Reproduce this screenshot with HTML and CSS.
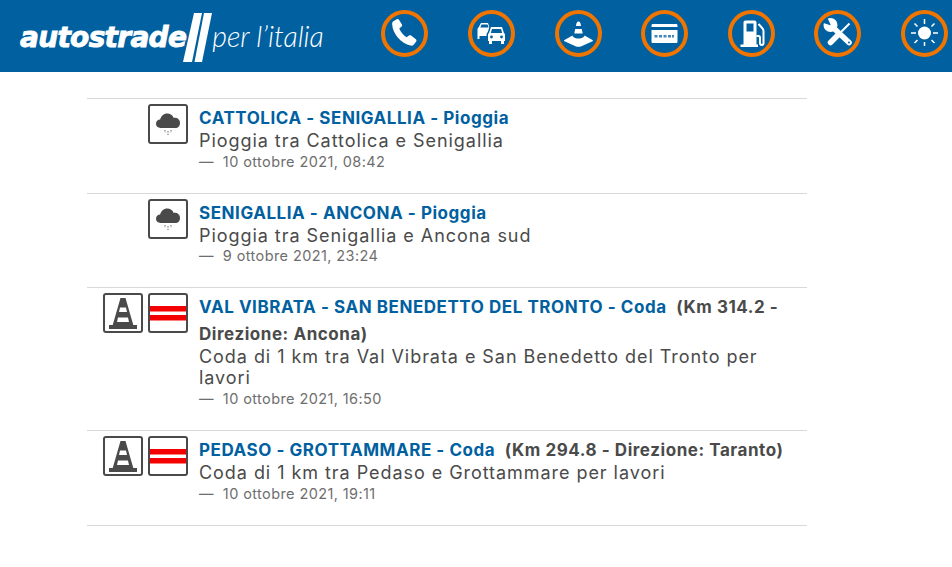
FILE: index.html
```html
<!DOCTYPE html>
<html lang="it">
<head>
<meta charset="utf-8">
<title>Autostrade per l'Italia</title>
<link rel="stylesheet" href="styles.css">
</head>
<body>
<header class="top">
  <div class="logo">
    <span class="logo-a">autostrade</span>
    <svg class="logo-bars" width="30" height="50" viewBox="0 0 30 50"><polygon points="11,0 19,0 9,49 0,49" fill="#fff"/><polygon points="21,0 29,0 19,49 11.500,49" fill="#fff"/></svg>
    <span class="logo-b">per l’italia</span>
  </div>
  <nav class="nav">
    <a class="nav-i"><svg viewBox="0 0 47 47"><circle cx="23.5" cy="23.5" r="21.5" class="ring"/><path fill="#fff" d="M12 11.500l3.800-2.300c.9-.5 1.700-.2 2.200.6l2.900 4.800c.4.8.3 1.500-.3 2l-2.300 1.900c1.300 3.300 3.800 6.500 7.300 8.800l2.400-1.700c.7-.5 1.400-.5 2.100 0l4.800 3.700c.7.6.8 1.400.3 2.100l-2.300 3.100c-.7 1-1.900 1.400-3.200 1.100-9.700-2.600-17.900-11.300-18.500-21.200-.1-1.300.1-2.300.8-2.900z"/></svg></a>
    <a class="nav-i"><svg viewBox="0 0 47 47"><circle cx="23.500" cy="23.500" r="21.500" class="ring"/><path fill="#fff" fill-rule="evenodd" d="M13 13h7l1.500 4.500c.7.4 1 1 1 1.800V26h-1v3h-2v-3h-8v3h-2v-3H9.500V19.300c0-.8.3-1.400 1-1.800zM13.500 14.500l-1.200 3h8.400l-1.200-3z"/><path fill="#fff" stroke="#0060a0" stroke-width="3" paint-order="stroke" d="M23 17h11l2 6c.7.4 1 1 1 1.800V31h-1v3h-3v-3H24v3h-3v-3h-1v-6.200c0-.8.3-1.400 1-1.800z"/><path fill="#0060a0" d="M24 19l-1.200 4h11.400l-1.200-4z"/><circle cx="23.500" cy="27" r="1.400" fill="#0060a0"/><circle cx="33.500" cy="27" r="1.400" fill="#0060a0"/></svg></a>
    <a class="nav-i"><svg viewBox="0 0 47 47"><circle cx="23.500" cy="23.500" r="21.500" class="ring"/><path fill="#fff" d="M21 16c.2-3 1-4.500 2.500-4.500s2.300 1.500 2.500 4.500zM20.200 19h6.600l.9 4.500H19.300zM17.500 25.500c0 1.500 2.500 3 6 3s6-1.500 6-3l8 4.500c.6.400.6.800 0 1.200l-11 5c-2 .8-4 .8-6 0l-11-5c-.6-.4-.6-.8 0-1.200z"/></svg></a>
    <a class="nav-i"><svg viewBox="0 0 47 47"><circle cx="23.500" cy="23.500" r="21.500" class="ring"/><path fill="#fff" d="M12 14h23c1 0 1.500.5 1.500 1.500V17h-26v-1.500c0-1 .5-1.500 1.500-1.500zM10.500 20h26v11.500c0 1-.5 1.500-1.500 1.500H12c-1 0-1.500-.5-1.500-1.500z"/><path fill="#0060a0" opacity=".75" d="M13.500 25h3v2.500h-3zM18 25h3v2.500h-3zM22.500 25h3v2.500h-3zM27 25h3v2.500h-3zM31 25h2v2.500h-2z"/></svg></a>
    <a class="nav-i"><svg viewBox="0 0 47 47"><circle cx="23.500" cy="23.500" r="21.500" class="ring"/><path fill="#fff" fill-rule="evenodd" d="M15.500 12.500c0-1.200.8-2 2-2h9c1.200 0 2 .8 2 2v22h1.500v2.500H12.500v-2.500h3zm3 1v8h7v-8z"/><path fill="none" stroke="#fff" stroke-width="2" d="M28.500 26h2c1 0 1.500.7 1.500 2v5c0 2.500 3.500 2.500 3.500 0V21c0-1.500-.8-2.500-1.800-3.500L30.500 14"/></svg></a>
    <a class="nav-i"><svg viewBox="0 0 47 47"><circle cx="23.500" cy="23.500" r="21.500" class="ring"/><path stroke="#fff" stroke-width="2" fill="none" d="M35.500 13.500l-8.500 8.500"/><path stroke="#fff" stroke-width="5.500" stroke-linecap="round" fill="none" d="M24.500 24.500l-8 8"/><circle cx="16.500" cy="15" r="7" fill="#fff"/><path fill="#0060a0" d="M17 15.500L8 12.500l5-5.500z"/><path stroke="#fff" stroke-width="5.500" stroke-linecap="round" fill="none" d="M18.500 17l16.500 15.500"/><circle cx="35" cy="32.500" r="1" fill="#0060a0"/></svg></a>
    <a class="nav-i"><svg viewBox="0 0 47 47"><circle cx="23.500" cy="23.500" r="21.500" class="ring"/><circle cx="23.500" cy="23" r="6.500" fill="#fff"/><path stroke="#fff" stroke-width="1.500" fill="none" d="M23.500 9v5M23.500 32v4M10 23h5M32 23h5M13.500 13.500l3 3M30.500 30l3 3M33.500 13.500l-3 3M16.500 30l-3 3"/></svg></a>
  </nav>
</header>

<main class="list">
  <article class="row">
    <div class="icons">
      <span class="ico"><svg viewBox="0 0 36 36"><path fill="#4a4a4a" d="M10.500 22c-2.800 0-4.500-1.900-4.500-4.200 0-2.400 1.800-4.100 4.100-4.200.9-3.600 3.600-6.100 7.100-6.100 3.100 0 5.500 1.800 6.500 4.400 3.700-.4 6.300 1.800 6.300 5 0 2.900-1.900 5.100-4.500 5.100z"/><path stroke="#8a8a8a" stroke-width="1.300" stroke-dasharray="1.500 1.200" d="M15 24v3M18 25v4M21 24v3"/></svg></span>
    </div>
    <div class="body">
      <h3 class="ttl"><a>CATTOLICA - SENIGALLIA - Pioggia</a></h3>
      <p class="desc">Pioggia tra Cattolica e Senigallia</p>
      <p class="date">—&nbsp; 10 ottobre 2021, 08:42</p>
    </div>
  </article>
  <article class="row">
    <div class="icons">
      <span class="ico"><svg viewBox="0 0 36 36"><path fill="#4a4a4a" d="M10.500 22c-2.800 0-4.500-1.900-4.500-4.200 0-2.400 1.800-4.100 4.100-4.200.9-3.600 3.600-6.100 7.100-6.100 3.100 0 5.500 1.800 6.500 4.400 3.700-.4 6.300 1.800 6.300 5 0 2.900-1.900 5.100-4.500 5.100z"/><path stroke="#8a8a8a" stroke-width="1.300" stroke-dasharray="1.500 1.200" d="M15 24v3M18 25v4M21 24v3"/></svg></span>
    </div>
    <div class="body">
      <h3 class="ttl"><a>SENIGALLIA - ANCONA - Pioggia</a></h3>
      <p class="desc">Pioggia tra Senigallia e Ancona sud</p>
      <p class="date">—&nbsp; 9 ottobre 2021, 23:24</p>
    </div>
  </article>
  <article class="row">
    <div class="icons">
      <span class="ico"><svg viewBox="0 0 36 36"><path fill="#4a4a4a" fill-rule="evenodd" d="M15.500 3h5l7.800 27H32v4H4v-4h3.700zM15 12.500l-1 4.500h8l-1-4.500zM13 22.500l-1 4.500h12l-1-4.500z"/></svg></span>
      <span class="ico"><svg viewBox="0 0 36 36"><rect y="11" width="36" height="5.500" fill="#f50000"/><rect y="20" width="36" height="5.500" fill="#f50000"/></svg></span>
    </div>
    <div class="body">
      <h3 class="ttl"><a>VAL VIBRATA - SAN BENEDETTO DEL TRONTO - Coda</a> <span class="km">(Km 314.2 - Direzione: Ancona)</span></h3>
      <p class="desc">Coda di 1 km tra Val Vibrata e San Benedetto del Tronto per lavori</p>
      <p class="date">—&nbsp; 10 ottobre 2021, 16:50</p>
    </div>
  </article>
  <article class="row row-last">
    <div class="icons">
      <span class="ico"><svg viewBox="0 0 36 36"><path fill="#4a4a4a" fill-rule="evenodd" d="M15.500 3h5l7.800 27H32v4H4v-4h3.700zM15 12.500l-1 4.500h8l-1-4.500zM13 22.500l-1 4.500h12l-1-4.500z"/></svg></span>
      <span class="ico"><svg viewBox="0 0 36 36"><rect y="11" width="36" height="5.500" fill="#f50000"/><rect y="20" width="36" height="5.500" fill="#f50000"/></svg></span>
    </div>
    <div class="body">
      <h3 class="ttl"><a>PEDASO - GROTTAMMARE - Coda</a> <span class="km">(Km 294.8 - Direzione: Taranto)</span></h3>
      <p class="desc">Coda di 1 km tra Pedaso e Grottammare per lavori</p>
      <p class="date">—&nbsp; 10 ottobre 2021, 19:11</p>
    </div>
  </article>
</main>
</body>
</html>
```
FILE: styles.css
```css
* { box-sizing: border-box; }
html, body { margin: 0; padding: 0; }
body {
  background: #fff;
  color: #4a4a4a;
  font-family: "Inter", "Noto Sans", sans-serif;
  overflow: hidden;
  height: 567px;
}
.top {
  height: 72px;
  background: #0060a0;
  display: flex;
  align-items: flex-start;
  justify-content: space-between;
  padding-right: 4px;
}
.logo {
  display: flex;
  align-items: center;
  height: 72px;
  padding-left: 20px;
  color: #fff;
}
.logo-a {
  font: italic 700 28px "DejaVu Sans", sans-serif;
  letter-spacing: -0.7px;
  -webkit-text-stroke: 0.9px #fff;
  margin-top: 2px;
}
.logo-bars { margin: 4px 0 0 -3px; flex: none; }
.logo-b {
  font: italic 300 28.500px "Lato", sans-serif;
  margin-left: -1px;
}
.nav {
  display: flex;
  gap: 39.6px;
  padding-top: 9.5px;
}
.nav-i { display: block; width: 47px; height: 47px; }
.nav-i svg { display: block; width: 47px; height: 47px; }
.ring { fill: none; stroke: #ef7500; stroke-width: 4; }
.list {
  width: 720px;
  margin: 26px 0 0 87px;
}
.row {
  display: flex;
  border-top: 1px solid #d9d9d9;
  padding: 5px 0 21.200px;
}
.row-last { border-bottom: 1px solid #d9d9d9; }
.icons {
  width: 101px;
  flex: none;
  display: flex;
  justify-content: flex-end;
  gap: 5px;
}
.ico {
  display: block;
  width: 40px;
  height: 40px;
  border: 2px solid #4a4a4a;
  border-radius: 3px;
  background: #fff;
}
.ico svg { display: block; width: 36px; height: 36px; }
.body { margin-left: 11px; flex: 1; min-width: 0; padding-top: 1px; }
.ttl {
  margin: 0;
  font-size: 17px;
  line-height: 26.200px;
  font-weight: 700;
  letter-spacing: 0.55px;
}
.ttl a { color: #0060a0; }
.km { color: #4a4a4a; margin-left: 5px; }
.desc {
  margin: -1.200px 0 0;
  font-size: 18px;
  line-height: 21.700px;
  letter-spacing: 0.95px;
  color: #4a4a4a;
}
.date {
  margin: 0;
  font-size: 14.500px;
  line-height: 19.800px;
  letter-spacing: 0.4px;
  color: #6e6e6e;
}
```
